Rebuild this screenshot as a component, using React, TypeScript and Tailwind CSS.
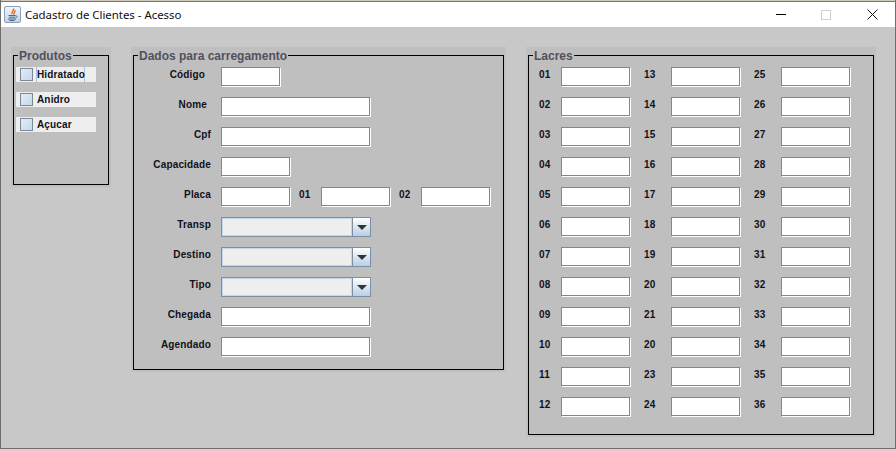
const Field = ({ w }: { w: string }) => (
  <div className={`${w} h-[20px] bg-white border border-t-[#7a8a99] border-l-[#7a8a99] border-r-white border-b-white shadow-[inset_-1px_-1px_0_#7a8a99]`} />
);

const Label = ({ children, className = "" }: { children: React.ReactNode; className?: string }) => (
  <span className={`text-[10px] leading-[16px] font-bold text-[#11111a] tracking-[0.15px] ${className}`}>{children}</span>
);

const Combo = () => (
  <div className="w-[150px] h-[20px] flex border border-[#7d8fa3] bg-[#eeeeee]">
    <div className="flex-1 border border-[#c4d8ec] bg-[#eeeeee]" />
    <div className="w-[18px] border-l border-[#7d8fa3] bg-gradient-to-b from-white to-[#b8cfe5] flex items-center justify-center">
      <svg width="10" height="5" viewBox="0 0 10 5"><path d="M0 0H10L5 5Z" fill="#333333" /></svg>
    </div>
  </div>
);

const Panel = ({ title, className, children }: { title: string; className: string; children: React.ReactNode }) => (
  <div className={`${className} bg-[#bfbfbf] pt-[8px] px-[2px] pb-[2px]`}>
    <div className="relative h-full border border-black">
      <span className="absolute -top-[8px] left-[4px] bg-[#bfbfbf] px-[1px] text-[12px] leading-[16px] font-bold text-[#51515c]">{title}</span>
      {children}
    </div>
  </div>
);

const Check = ({ label, focus }: { label: string; focus?: boolean }) => (
  <div className="w-[80px] h-[15px] bg-[#eeeeee] flex items-center pl-[4px]">
    <div className="w-[13px] h-[13px] border border-[#7a8a99] bg-gradient-to-br from-[#e3ecf5] to-[#c6d8ea]" />
    <span className={`ml-[3px] h-[15px] border-x flex items-center ${focus ? "border-[#a8c4e0] w-[49px]" : "border-transparent"}`}>
      <Label>{label}</Label>
    </span>
  </div>
);

const Row = ({ label, inset = "", children }: { label: string; inset?: string; children: React.ReactNode }) => (
  <div className="flex h-[20px]">
    <Label className={`w-[77px] text-right mr-[10px] ${inset}`}>{label}</Label>
    {children}
  </div>
);

const lacres = [
  ["01", "02", "03", "04", "05", "06", "07", "08", "09", "10", "11", "12"],
  ["13", "14", "15", "16", "17", "18", "19", "20", "21", "20", "23", "24"],
  ["25", "26", "27", "28", "29", "30", "31", "32", "33", "34", "35", "36"],
];

export default function App() {
  return (
    <div className="w-[896px] h-[449px] flex flex-col border-x border-b border-[#6f6f6f] bg-[#c8c8c8] [font-family:'Liberation_Sans',Arial,sans-serif]">
      <div className="h-[1px] bg-[#cfcabd]" />
      <div className="h-[1px] bg-[#6f7a85]" />
      <div className="h-[25px] bg-white flex items-center">
        <div className="ml-[3px] w-[17px] h-[17px] rounded-[2px] border border-[#8aa0b8] bg-gradient-to-b from-[#f2f6fa] to-[#c3d4e5] flex items-center justify-center">
          <svg width="13" height="13" viewBox="0 0 13 13" fill="none">
            <path d="M7.5 0.5C8.5 2.5 5 3.5 6.2 6M9.5 2.5C7.5 3.5 9 5 7.5 6.5" stroke="#e0701f" strokeWidth="1.4" />
            <path d="M2.5 7.5H9.5M3 9.2H9M2 11H10M3.5 12.5H8.5" stroke="#4a6a8f" />
            <path d="M9.5 7.8C11.5 7.5 11.5 9.5 9.5 9.7" stroke="#4a6a8f" />
          </svg>
        </div>
        <span className="ml-[4px] text-[11.4px] text-[#101010] [font-family:'Noto_Sans',sans-serif]">Cadastro de Clientes - Acesso</span>
        <div className="ml-auto flex items-center">
          <div className="w-[10px] h-[1px] bg-black mr-[35px]" />
          <div className="w-[10px] h-[10px] border border-[#cfcfcf] mr-[36px]" />
          <svg width="11" height="11" viewBox="0 0 11 11" className="mr-[17px]"><path d="M0.5 0.5L10.5 10.5M10.5 0.5L0.5 10.5" stroke="#111" fill="none" /></svg>
        </div>
      </div>
      <div className="flex-1 flex items-start gap-[20px] pt-[20px] pl-[10px]">
        <Panel title="Produtos" className="w-[100px] h-[140px]">
          <div className="flex flex-col gap-[10px] pt-[11px] pl-[2px]">
            <Check label="Hidratado" focus />
            <Check label="Anidro" />
            <Check label="Açucar" />
          </div>
        </Panel>
        <Panel title="Dados para carregamento" className="w-[375px] h-[325px]">
          <div className="flex flex-col gap-[10px] pt-[11px]">
            <Row label="Código" inset="pr-[6px]"><Field w="w-[60px]" /></Row>
            <Row label="Nome" inset="pr-[4px]"><Field w="w-[150px]" /></Row>
            <Row label="Cpf"><Field w="w-[150px]" /></Row>
            <Row label="Capacidade"><Field w="w-[70px]" /></Row>
            <Row label="Placa">
              <Field w="w-[70px]" />
              <Label className="ml-[8px] w-[22px]">01</Label>
              <Field w="w-[70px]" />
              <Label className="ml-[8px] w-[22px]">02</Label>
              <Field w="w-[70px]" />
            </Row>
            <Row label="Transp"><Combo /></Row>
            <Row label="Destino"><Combo /></Row>
            <Row label="Tipo"><Combo /></Row>
            <Row label="Chegada"><Field w="w-[150px]" /></Row>
            <Row label="Agendado"><Field w="w-[150px]" /></Row>
          </div>
        </Panel>
        <Panel title="Lacres" className="w-[350px] h-[390px]">
          <div className="flex gap-[13px] pt-[11px] pl-[10px]">
            {lacres.map((col, i) => (
              <div key={i} className="flex flex-col gap-[10px]">
                {col.map((n, j) => (
                  <div key={j} className="flex h-[20px]">
                    <Label className={i === 0 ? "w-[22px]" : "w-[27px]"}>{n}</Label>
                    <Field w="w-[70px]" />
                  </div>
                ))}
              </div>
            ))}
          </div>
        </Panel>
      </div>
    </div>
  );
}
